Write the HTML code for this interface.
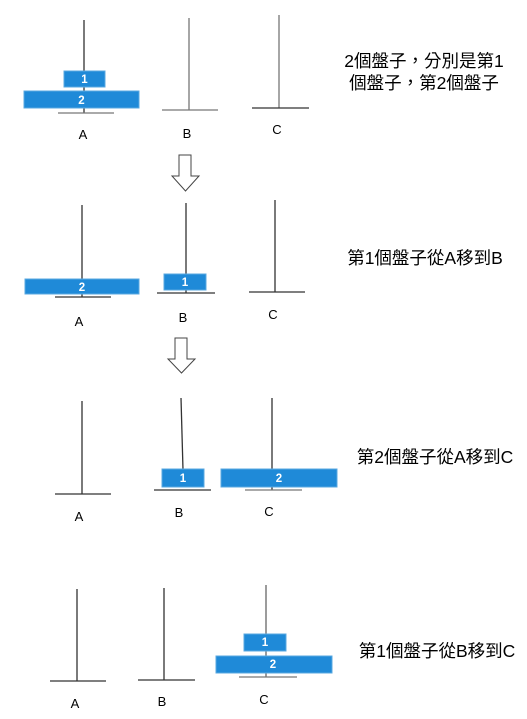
<!DOCTYPE html>
<html><head><meta charset="utf-8"><style>
html,body{margin:0;padding:0;background:#fff;}
svg{display:block}
text{font-family:"Liberation Sans","Noto Sans CJK TC",sans-serif;}
</style></head><body>
<svg width="527" height="719" viewBox="0 0 527 719" xmlns="http://www.w3.org/2000/svg">
<g stroke="#333" stroke-width="1.3" fill="none">
<line x1="84" y1="20" x2="84" y2="113"/><line x1="58" y1="113" x2="114" y2="113" stroke="#777"/>
<line x1="189" y1="18" x2="189" y2="110" stroke="#777"/><line x1="162" y1="110" x2="218" y2="110" stroke="#777"/>
<line x1="279" y1="15" x2="279" y2="108" stroke="#777"/><line x1="252" y1="108" x2="309" y2="108"/>
<line x1="82" y1="205" x2="82" y2="297"/><line x1="55" y1="297" x2="111" y2="297"/>
<line x1="186" y1="203" x2="186" y2="293"/><line x1="157" y1="293" x2="215" y2="293"/>
<line x1="275" y1="200" x2="275" y2="292"/><line x1="249" y1="292" x2="305" y2="292"/>
<line x1="82" y1="401" x2="82" y2="494"/><line x1="55" y1="494" x2="111" y2="494"/>
<line x1="181" y1="398" x2="183" y2="470"/><line x1="154" y1="490" x2="211" y2="490"/>
<line x1="272" y1="398" x2="272" y2="490"/><line x1="245" y1="490" x2="302" y2="490" stroke="#777"/>
<line x1="77" y1="589" x2="77" y2="681"/><line x1="50" y1="681" x2="106" y2="681"/>
<line x1="164" y1="588" x2="164" y2="680"/><line x1="138" y1="680" x2="195" y2="680"/>
<line x1="266" y1="585" x2="266" y2="677" stroke="#666"/><line x1="239" y1="677" x2="297" y2="677" stroke="#777"/>
<path d="M179 155 H191 V176 H199 L185.5 191 L172 176 H179 Z" stroke="#444" stroke-width="1"/>
<path d="M175 338 H187 V359 H195 L181.5 373 L168 359 H175 Z" stroke="#444" stroke-width="1"/>
</g>
<g fill="#1f8ad8" stroke="#5aa8e0" stroke-width="1">
<rect x="64" y="71" width="41" height="16"/><rect x="24" y="91" width="115" height="17"/>
<rect x="25" y="279" width="114" height="15"/><rect x="164" y="274" width="42" height="16"/>
<rect x="162" y="469" width="42" height="18"/><rect x="221" y="469" width="116" height="18"/>
<rect x="244" y="634" width="42" height="17"/><rect x="216" y="656" width="116" height="17"/>
</g>
<g fill="#fff" font-size="11.5" font-weight="bold" text-anchor="middle">
<text x="84.5" y="83">1</text><text x="81.5" y="104">2</text>
<text x="82" y="291">2</text><text x="185" y="286">1</text>
<text x="183" y="482">1</text><text x="279" y="482">2</text>
<text x="265" y="646">1</text><text x="273" y="668">2</text>
</g>
<g fill="#000" font-size="13" text-anchor="middle">
<text x="83" y="139">A</text><text x="187" y="138">B</text><text x="277" y="134">C</text>
<text x="79" y="326">A</text><text x="183" y="322">B</text><text x="273" y="319">C</text>
<text x="79" y="521">A</text><text x="179" y="517">B</text><text x="269" y="516">C</text>
<text x="75" y="708">A</text><text x="162" y="706">B</text><text x="264" y="704">C</text>
</g>
<g fill="#000" font-size="17.5" text-anchor="middle">
<text x="424" y="67">2個盤子，分別是第1</text>
<text x="424" y="89">個盤子，第2個盤子</text>
<text x="425" y="264">第1個盤子從A移到B</text>
<text x="435" y="463">第2個盤子從A移到C</text>
<text x="437" y="657">第1個盤子從B移到C</text>
</g>
</svg>
</body></html>
